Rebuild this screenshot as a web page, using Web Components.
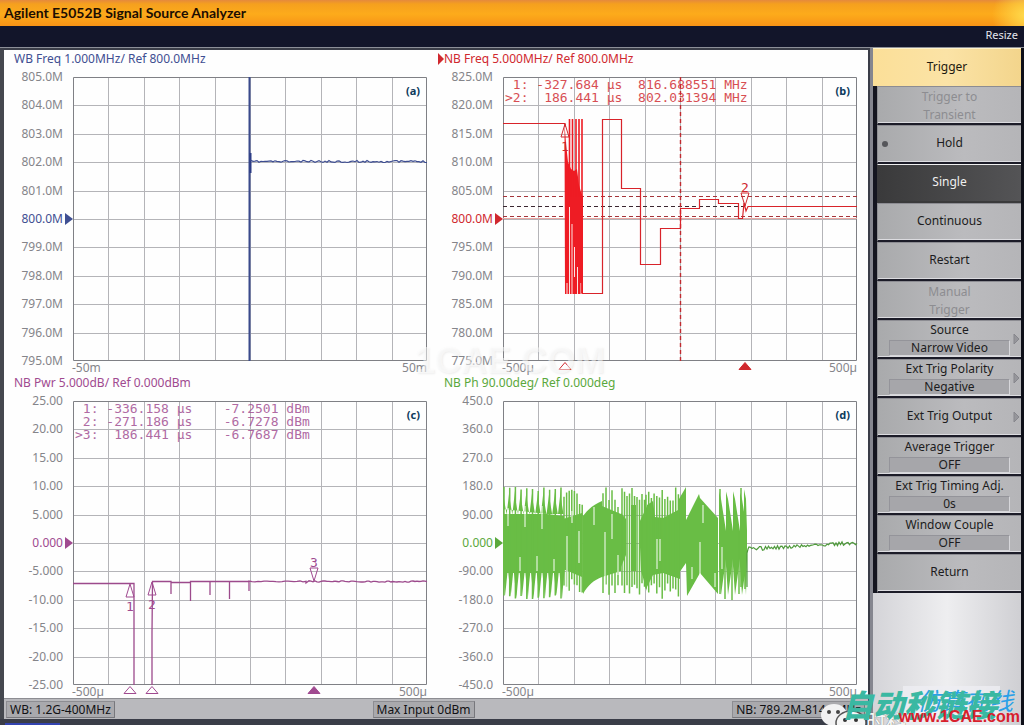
<!DOCTYPE html>
<html lang="en">
<head>
<meta charset="utf-8">
<title>Agilent E5052B Signal Source Analyzer</title>
<style>
html, body { margin: 0; height: 100%; }
body { font: 12px/14px "Noto Sans", "Liberation Sans", sans-serif; }
</style>
</head>
<body>
<signal-analyzer></signal-analyzer>

<template id="analyzer-template">
<style>
:host { display: flex; flex-direction: column; min-height: 100vh; position: relative; overflow: hidden; background: #3a3d48; box-sizing: border-box; }
header { height: 26px; display: flex; align-items: center; padding: 0 4px; box-sizing: border-box;
  background: radial-gradient(circle at 100% 60%, #ffd84a 0, rgba(255,216,74,0) 32px), linear-gradient(#e58a3c 0, #f5a01e 4px, #fdab1b 14px, #f79316 26px); }
h1 { margin: 0; font: 700 14px/16px Lato, "Noto Sans", sans-serif; color: #1c0d02; white-space: nowrap; }
nav { height: 21px; background: #12152a; display: flex; justify-content: flex-end; align-items: center; padding: 0 6px 3px; box-sizing: border-box; }
nav button { all: unset; color: #e4e6ee; font-size: 11px; line-height: 14px; }
main { flex: 1; display: flex; border-top: 1px solid #8c8f98; background: #3a3d48; }
.screen { flex: 1; min-width: 0; display: flex; flex-direction: column; margin: 2px 2px 6px 0; border-left: 4px solid #45484f; }
.plots { flex: 1; display: grid; grid-template-columns: 1fr 1fr; grid-template-rows: 1fr 1fr; background: #fefefe; padding: 0 3px 0 1px; }
aside { width: 148px; flex: none; display: flex; flex-direction: column; border-left: 3px solid #85868f; border-right: 3px solid #0e0f18;
  background: linear-gradient(90deg, #d4d4d8, #eeeef0 50%, #cfcfd3); }
h2 { margin: 0; height: 38px; padding-bottom: 2px; border-top: 1px solid #fff3c8; display: flex; align-items: center; justify-content: center; box-sizing: border-box; font-size: 12px; font-weight: 400; color: #1d1a10; background: linear-gradient(90deg, #fbdf98, #fbe3a6 50%, #f3d58c); }
.keys { border-left: 4px solid #14151f; display: flex; flex-direction: column; }
.task { position: absolute; left: 5px; bottom: 0; width: 55px; height: 2px; background: #3344b0; }
.mark { position: absolute; pointer-events: none; white-space: nowrap; }
.center { left: 415px; top: 341px; font: 700 36px/40px "Liberation Sans", sans-serif; color: rgba(255,255,255,.5); text-shadow: 1px 1px 2px rgba(120,120,120,.12); }
.panel { right: 24px; bottom: 0; width: 97px; height: 39px; background: rgba(238,238,242,.8); }
.blue { right: 11px; bottom: 12px; font: italic 400 24px/26px "Noto Sans CJK SC", sans-serif; color: #2aa0e8; }
.teal { right: 27px; bottom: 4px; font: italic 900 31px/34px "Noto Sans CJK SC", sans-serif; color: #3ab8a2; }
.red { right: 4px; bottom: 0; font: 700 16px/17px "Liberation Sans", sans-serif; color: #d8202c; }
.chat { left: 820px; bottom: 0; }
.white { left: 866px; bottom: -8px; font: 500 20px/24px "Noto Sans CJK SC", sans-serif; color: #f4f4f4; text-shadow: 0 0 1px #555; }
</style>
<header><h1>Agilent E5052B Signal Source Analyzer</h1></header>
<nav><button type="button">Resize</button></nav>
<main>
  <section class="screen">
    <div class="plots">
      <trace-chart trace="a"></trace-chart>
      <trace-chart trace="b"></trace-chart>
      <trace-chart trace="c"></trace-chart>
      <trace-chart trace="d"></trace-chart>
    </div>
    <status-bar>
      <span slot="left">WB: 1.2G-400MHz</span>
      <span slot="middle">Max Input 0dBm</span>
      <span slot="right">NB: 789.2M-814.8MHz</span>
    </status-bar>
  </section>
  <aside>
    <h2>Trigger</h2>
    <div class="keys">
      <soft-key off>Trigger to<br>Transient</soft-key>
      <soft-key dot>Hold</soft-key>
      <soft-key active>Single</soft-key>
      <soft-key>Continuous</soft-key>
      <soft-key>Restart</soft-key>
      <soft-key off>Manual<br>Trigger</soft-key>
      <soft-key more value="Narrow Video">Source</soft-key>
      <soft-key more value="Negative">Ext Trig Polarity</soft-key>
      <soft-key more>Ext Trig Output</soft-key>
      <soft-key value="OFF">Average Trigger</soft-key>
      <soft-key value="0s">Ext Trig Timing Adj.</soft-key>
      <soft-key value="OFF">Window Couple</soft-key>
      <soft-key>Return</soft-key>
    </div>
  </aside>
</main>
<div class="task"></div>
<div class="mark center">1CAE.COM</div>
<div class="mark panel"></div>
<div class="mark white">时科</div>
<svg class="mark chat" width="48" height="22" viewBox="0 0 48 22" aria-hidden="true">
  <ellipse cx="14" cy="12" rx="13" ry="11" fill="#f1f1f2"/><circle cx="9" cy="9" r="2" fill="#444"/><circle cx="18" cy="9" r="2" fill="#444"/>
  <ellipse cx="31" cy="20" rx="15" ry="12" fill="#f6f6f6" stroke="#555" stroke-width="1.5"/><circle cx="25" cy="17" r="2" fill="#333"/><circle cx="36" cy="17" r="2" fill="#333"/>
</svg>
<div class="mark blue">仿真在线</div>
<div class="mark teal">自动秒链接</div>
<div class="mark red">www.1CAE.com</div>
</template>

<template id="chart-template">
<style>
:host { display: flex; flex-direction: column; min-width: 0; padding: 0 8px 0 0; --ink: #333; }
h3 { margin: 0 0 9px 9px; height: 18px; font-size: 12px; line-height: 18px; font-weight: 400; color: var(--ink); white-space: nowrap; position: relative; }
.cursor { position: absolute; left: -6px; top: 3px; }
.body { flex: 1; display: flex; min-height: 100px; }
.scale { width: 68px; flex: none; display: flex; flex-direction: column; justify-content: space-between; margin: -7px 0; padding: 0 10px 0 0; box-sizing: border-box; text-align: right; color: #85858a; }
.scale span { position: relative; display: block; height: 14px; line-height: 14px; }
.scale .ref { color: var(--ink); }
.scale svg { position: absolute; right: -10px; top: 1px; }
.plot { flex: 1; min-width: 0; position: relative; }
.plot > svg { position: absolute; inset: 0; width: 100%; height: 100%; overflow: visible; }
pre { position: absolute; left: 2px; top: 1px; margin: 0; font: 13px/13px "DejaVu Sans Mono", monospace; color: var(--ink); opacity: .82; }
.tag { position: absolute; right: 7px; top: 7px; font-weight: 700; font-size: 11px; line-height: 14px; color: #0d3a5c; }
.num { position: absolute; transform: translate(-50%, -50%); font: 13px/13px "DejaVu Sans Mono", monospace; color: var(--ink); }
.axis { display: flex; justify-content: space-between; height: 13px; line-height: 14px; padding-left: 67px; color: #85858a; }
</style>
<h3></h3>
<div class="body"><div class="scale"></div><div class="plot"></div></div>
<div class="axis"><span></span><span></span></div>
</template>

<template id="key-template">
<style>
:host { display: block; height: 39px; }
button { all: unset; box-sizing: border-box; position: relative; width: 100%; height: 100%; display: flex; flex-direction: column; align-items: center; justify-content: center; text-align: center; line-height: 18px; color: #1c1c20;
  background: linear-gradient(90deg, #a9aaac, #bbbbbe 60%, #b5b5b8); border-top: 1px solid #8c8c92; border-left: 1px solid #8f9094; border-bottom: 2px solid #1c1c28; box-shadow: inset 0 -1px #dcdce0; padding-bottom: 2px; }
:host([off]) button { color: #8d8d91; padding: 2px 0 0; }
:host([active]) button { color: #f0f0f0; background: linear-gradient(90deg, #3a3a3b, #545456); border-color: #3a3a3b; border-top-color: #eee; box-shadow: none; }
:host([value]) button { justify-content: flex-start; padding: 0; }
output { display: none; width: 121px; height: 16px; box-sizing: border-box; margin-top: 1px; background: #a6a6aa; border: 1px solid #94949a; border-right-color: #d6d6da; border-bottom-color: #d6d6da; line-height: 14px; }
:host([value]) output { display: block; }
.arrow { display: none; position: absolute; right: 1px; top: 12px; }
:host([more]) .arrow { display: block; }
.dot { display: none; position: absolute; left: 4px; top: 15px; width: 6px; height: 6px; border-radius: 3px; background: #55565a; }
:host([dot]) .dot { display: block; }
</style>
<button type="button"><span class="dot"></span><span class="label"><slot></slot></span><output></output><svg class="arrow" width="7" height="12" viewBox="0 0 7 12" aria-hidden="true"><path d="M1 1 6 6 1 11Z" fill="#96969b" stroke="#86868c"/></svg></button>
</template>

<template id="status-template">
<style>
:host { display: flex; justify-content: space-between; align-items: center; height: 21px; padding: 0 3px 0 2px; box-sizing: border-box; background: #b9b9bd; border-top: 1px solid #8d8d92; color: #111114; }
div { background: #a9a9ad; border: 1px solid #8d8d92; border-right-color: #77777c; border-bottom-color: #77777c; padding: 0 3px; line-height: 15px; white-space: nowrap; }
</style>
<div><slot name="left"></slot></div><div><slot name="middle"></slot></div><div><slot name="right"></slot></div>
</template>

<script>
const W = 354, H = 284;

// Small repeatable noise source for the trace ripple.
function noise(seed) {
  let s = seed;
  return () => (s = (s * 16807) % 2147483647) / 2147483647 - 0.5;
}
function ripple(x0, x1, y0, y1, amp, step, seed) {
  const r = noise(seed);
  let d = '';
  for (let x = x0; x <= x1; x += step) {
    const y = y0 + (y1 - y0) * (x - x0) / (x1 - x0) + r() * amp;
    d += `L${x} ${y.toFixed(1)}`;
  }
  return d;
}
const line = (d, color, extra = '') => `<path d="${d}" fill="none" stroke="${color}" ${extra}/>`;
const bar = (x, a, b) => `M${x} ${a}V${b}`;

function traceA() {
  return line('M176.500 0V284', '#3a4a8c', 'stroke-width="2"') + line('M177.500 76V96', '#2c3c86', 'stroke-width="2"') +
    line('M178 84' + ripple(178, 354, 84.5, 84.5, 2, 2, 11), '#3c4c90', 'stroke-width="1.2"');
}
function traceB() {
  const red = '#d8232a', fill = '#ee1c24';
  const slits = bar(64, 206, 217) + bar(66.5, 130, 217) + bar(69, 147, 217) + bar(71.5, 170, 200) + bar(74.5, 190, 217) + bar(78, 206, 217);
  const spikes = bar(66.5, 42, 120) + bar(69.5, 42, 120) + bar(73, 42, 120) + bar(76, 42, 120) + bar(79, 42, 216);
  return line('M0 141.500H354', '#e9a8a4') +
    line('M0 119.500H354M0 139.500H354', '#a5343a', 'stroke-dasharray="4 3"') +
    line('M0 129.500H354', '#3a2730', 'stroke-dasharray="4 3"') +
    line('M177.500 0V284', '#c02a30', 'stroke-dasharray="4 3" stroke-width="1.4"') +
    `<path d="M61.500 47 63 66 65 85 68 92 71 94 74 92 76 108 78 115 80 120V217H62Z" fill="${fill}"/>` +
    line(slits, '#fbe3e1', 'stroke-width="1"') + line(spikes, fill, 'stroke-width="1.6"') +
    line('M0 46.500H62V50M80 216.500H99.500V42.500H118.500V111.500H137.500V187.500H157.500V151.500H177.500V131.500H196.500V122.500H215.500V126.500H235.500V141.500H239.500L241 126 243 134 245 129.500H354', red, 'stroke-width="1.2"');
}
function traceC() {
  const p = '#9c4a8c';
  return line('M0 182.500H61V284M79 284V232L79.500 180.500H98V193M98 181.500H117.500V200V180.500H137V194V180.500H156.500V198V180.500H176V190V181.500' +
    ripple(176, 234, 180.5, 180.5, 1, 3, 5) + 'V182' + ripple(236, 354, 180.5, 180.5, 1.4, 2, 9), p, 'stroke-width="1.300"');
}
function traceD() {
  const g = '#69bd45', dark = '#4f9a3c', r = noise(77);
  let d = '', s = '', cut = '';
  d += 'M0 108V172L61 172V115Z';
  // Regular sawtooth spikes on the left.
  for (let x = 1; x < 62; x += 5.7) {
    const t = 88 + r() * 4, b = 196 + r() * 4;
    d += `M${Math.max(0, x - 3)} 113L${x} ${t}V98L${x + 2.5} 113ZM${Math.max(0, x - 2)} 166L${x + 1} ${b}L${x + 2} 186L${x + 4} 166Z`;
    s += bar(x, t, b);
  }
  cut += bar(5, 107, 125) + bar(22, 105, 126) + bar(39, 105, 128) + bar(17, 156, 170) + bar(34, 155, 170) + bar(51, 158, 170) + bar(64, 135, 198);
  // Irregular spikes, the first smooth lobe, and more spikes.
  for (let x = 61; x < 80; x += 2.6) s += bar(x, 88 + (r() + .5) * 22, 196 - (r() + .5) * 18);
  d += 'M60 118V168L79 176V112ZM80 115C86 107 92 103 99 100V176C91 179 85 184 80 193Z';
  cut += bar(69, 110, 122) + bar(76, 130, 162) + bar(91, 106, 124);
  for (let x = 100; x < 118; x += 3) s += bar(x, 86 + (r() + .5) * 20, 194 - (r() + .5) * 16);
  d += 'M99 105 118 113V170L99 176Z';
  cut += bar(102, 131, 184) + bar(109, 113, 138) + bar(115, 154, 174);
  for (let x = 119; x < 143; x += 2.5) s += bar(x, 87 + (r() + .5) * 12, 194 - (r() + .5) * 12);
  d += 'M118 112 123 118V154L118 166ZM128 104H133V170H128ZM136 122 144 105V190L138 170Z';
  for (let x = 143; x < 177; x += 2.7) s += bar(x, 86 + (r() + .5) * 14, 198 - (r() + .5) * 18);
  d += 'M144 104 150 100 152 116 160 117 177 108V178L160 172 150 174 144 186Z';
  cut += bar(154, 138, 168) + bar(157, 138, 160);
  // Two smooth lobes.
  d += 'M176 98 183 86V119L196 93 197 97 215 117V193L197 172 184 195 183 162 176 172Z';
  cut += bar(197, 141, 174) + bar(200, 104, 122) + bar(189, 166, 178) + bar(212, 172, 186);
  // Trailing sawtooth.
  for (const x of [216, 223, 230, 237, 241]) {
    const e = Math.min(244, x + 7);
    d += `M${x} ${89 + r() * 5}L${x + 2} 98L${e} 130V158L${x + 2} 194L${x} 165Z`;
  }
  s += bar(217, 88, 193) + bar(222, 140, 198) + bar(229, 142, 199) + bar(236, 130, 193) + bar(238, 87, 186) + bar(242, 98, 188);
  cut += bar(219, 146, 168);
  return `<path d="${d}" fill="${g}"/>` + line(s, g, 'stroke-width="1.500"') + line(cut, '#fafdf8', 'stroke-width="1"') +
    line('M244 186V152L245 148' + ripple(246, 354, 148, 142, 4, 1.5, 31), dark, 'stroke-width="1.200"');
}

const CHARTS = {
  a: { title: 'WB Freq 1.000MHz/ Ref 800.0MHz', ink: '#3f4f92', start: '-50m', stop: '50m', draw: traceA,
    scale: ['805.0M', '804.0M', '803.0M', '802.0M', '801.0M', '800.0M', '799.0M', '798.0M', '797.0M', '796.0M', '795.0M'], marks: [] },
  b: { title: 'NB Freq 5.000MHz/ Ref 800.0MHz', ink: '#d0282e', start: '-500µ', stop: '500µ', draw: traceB, cursor: true,
    scale: ['825.0M', '820.0M', '815.0M', '810.0M', '805.0M', '800.0M', '795.0M', '790.0M', '785.0M', '780.0M', '775.0M'],
    read: ' 1: -327.684 µs  816.688551 MHz\n>2:  186.441 µs  802.031394 MHz',
    marks: [{ n: 1, x: 62, y: 47 }, { n: 2, x: 242, y: 129, down: true }] },
  c: { title: 'NB Pwr 5.000dB/ Ref 0.000dBm', ink: '#a04a90', start: '-500µ', stop: '500µ', draw: traceC,
    scale: ['25.00', '20.00', '15.00', '10.00', '5.000', '0.000', '-5.000', '-10.00', '-15.00', '-20.00', '-25.00'],
    read: ' 1: -336.158 µs    -7.2501 dBm\n 2: -271.186 µs    -6.7278 dBm\n>3:  186.441 µs    -6.7687 dBm',
    marks: [{ n: 1, x: 57, y: 183 }, { n: 2, x: 79, y: 181 }, { n: 3, x: 241, y: 180, down: true }] },
  d: { title: 'NB Ph 90.00deg/ Ref 0.000deg', ink: '#5aa83c', start: '-500µ', stop: '500µ', draw: traceD,
    scale: ['450.0', '360.0', '270.0', '180.0', '90.00', '0.000', '-90.00', '-180.0', '-270.0', '-360.0', '-450.0'], marks: [] }
};

class Base extends HTMLElement {
  constructor(id) {
    super();
    this.attachShadow({ mode: 'open' }).append(document.getElementById(id).content.cloneNode(true));
  }
}

class TraceChart extends Base {
  constructor() { super('chart-template'); }
  connectedCallback() {
    const name = this.getAttribute('trace'), c = CHARTS[name], $ = q => this.shadowRoot.querySelector(q);
    this.style.setProperty('--ink', c.ink);
    const tri = (w, h) => `<svg ${w === 6 ? 'class="cursor"' : ''} width="${w}" height="${h}" viewBox="0 0 8 12" preserveAspectRatio="none" aria-hidden="true"><path d="M0 0 8 6 0 12Z" fill="${c.ink}"/></svg>`;
    $('h3').innerHTML = (c.cursor ? tri(6, 12) : '') + c.title;
    $('.scale').innerHTML = c.scale.map((t, i) => i === 5 ? `<span class="ref">${t}${tri(8, 12)}</span>` : `<span>${t}</span>`).join('');
    let grid = '';
    for (let i = 1; i < 10; i++) grid += `M${Math.round(W * i / 10) + .5} 0V${H}M0 ${Math.round(H * i / 10) + .5}H${W}`;
    let marks = '', nums = '';
    for (const m of c.marks) {
      const k = m.down ? -1 : 1;
      marks += `<path d="M${m.x} ${m.y}l-4 ${13 * k}h8Z" fill="none" stroke="${c.ink}"/>`;
      const last = m === c.marks[c.marks.length - 1];
      marks += `<path d="M${m.x} 285.500l-6 7h12Z" fill="${last ? c.ink : '#fff'}" stroke="${c.ink}"/>`;
      nums += `<span class="num" style="left:${m.x / W * 100}%;top:${(m.y + (m.down ? -19 : 22)) / H * 100}%">${m.n}</span>`;
    }
    $('.plot').innerHTML = `<svg viewBox="0 0 ${W} ${H}" preserveAspectRatio="none" aria-hidden="true">` +
      line(grid, '#b4b4b8') + line(`M.500 .500H${W - .5}V${H - .5}H.500Z`, '#7f8085') + c.draw() + marks + '</svg>' +
      (c.read ? `<pre>${c.read.replace(/>/g, '&gt;')}</pre>` : '') + nums + `<span class="tag">(${name})</span>`;
    const ends = this.shadowRoot.querySelectorAll('.axis span');
    ends[0].textContent = c.start;
    ends[1].textContent = c.stop;
  }
}
class SoftKey extends Base {
  constructor() { super('key-template'); }
  connectedCallback() {
    this.shadowRoot.querySelector('output').textContent = this.getAttribute('value') || '';
    this.shadowRoot.querySelector('button').disabled = this.hasAttribute('off');
  }
}
class StatusBar extends Base { constructor() { super('status-template'); } }
class SignalAnalyzer extends Base { constructor() { super('analyzer-template'); } }

customElements.define('trace-chart', TraceChart);
customElements.define('soft-key', SoftKey);
customElements.define('status-bar', StatusBar);
customElements.define('signal-analyzer', SignalAnalyzer);
</script>
</body>
</html>
